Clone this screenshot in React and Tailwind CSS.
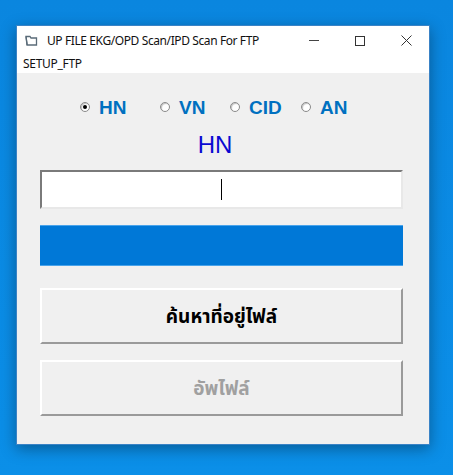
import { useState } from "react";

const ui = { fontFamily: '"Noto Sans", "Open Sans", sans-serif' };
const arial = { fontFamily: '"Liberation Sans", Arial, sans-serif' };
const thai = { fontFamily: '"Noto Sans Thai", Tahoma, "Noto Sans", sans-serif' };

function Radio({ label, checked, onClick, width }) {
  return (
    <button onClick={onClick} className={`flex items-center gap-[9px] ${width}`}>
      <span className="w-[10px] h-[10px] rounded-full border border-[#8a8a8a] bg-white flex items-center justify-center shadow-[inset_1px_1px_1px_rgba(0,0,0,0.25)]">
        {checked && <span className="w-[4px] h-[4px] rounded-full bg-black" />}
      </span>
      <span className="text-[19px] font-bold leading-none text-[#0070c0]" style={arial}>{label}</span>
    </button>
  );
}

export default function App() {
  const [mode, setMode] = useState("HN");

  return (
    <div className="w-[453px] h-[475px] bg-gradient-to-b from-[#0a86df] to-[#0b8fe8] pt-[25px] pl-[16px]">
      <div className="w-[414px] h-[420px] bg-[#f0f0f0] border border-[#3a83c6] shadow-[0_4px_14px_rgba(0,0,0,0.35)] flex flex-col">
        <div className="h-[29px] bg-white flex items-center pl-[8px]" style={ui}>
          <svg width="13" height="12" viewBox="0 0 13 12" className="mr-[9px]">
            <path d="M1 1.5h4l1 1.5h5.5v7H2z" fill="none" stroke="#5a6b78" strokeWidth="1.3" />
            <path d="M1 1.5l1.2 8.5" stroke="#5a6b78" strokeWidth="1.3" />
          </svg>
          <span className="text-[12px] text-[#111] tracking-[-0.4px]">UP FILE EKG/OPD Scan/IPD Scan For FTP</span>
          <div className="ml-auto flex items-center h-full">
            <div className="w-[46px] flex justify-center">
              <div className="w-[10px] h-px bg-[#444]" />
            </div>
            <div className="w-[46px] flex justify-center">
              <div className="w-[10px] h-[10px] border border-[#333]" />
            </div>
            <div className="w-[46px] flex justify-center">
              <svg width="11" height="11" viewBox="0 0 11 11">
                <path d="M0.5 0.5l10 10M10.5 0.5l-10 10" stroke="#333" strokeWidth="1" />
              </svg>
            </div>
          </div>
        </div>
        <div className="h-[18px] bg-white pl-[6px] flex items-center" style={ui}>
          <span className="text-[12px] text-[#111] leading-none tracking-[-0.3px]">SETUP_FTP</span>
        </div>

        <div className="flex flex-col pl-[23px] pr-[26px]">
          <div className="flex items-center mt-[26px] pl-[40px] h-[16px]">
            <Radio label="HN" checked={mode === "HN"} onClick={() => setMode("HN")} width="w-[80px]" />
            <Radio label="VN" checked={mode === "VN"} onClick={() => setMode("VN")} width="w-[70px]" />
            <Radio label="CID" checked={mode === "CID"} onClick={() => setMode("CID")} width="w-[71px]" />
            <Radio label="AN" checked={mode === "AN"} onClick={() => setMode("AN")} width="w-[60px]" />
          </div>

          <div className="mt-[18px] pr-[13px] text-center text-[24px] leading-none text-[#0a0ad2] h-[24px]" style={arial}>
            {mode}
          </div>

          <div className="mt-[13px] h-[39px] bg-white border-2 border-t-[#7a7a7a] border-l-[#7a7a7a] border-b-[#e8e8e8] border-r-[#e8e8e8] flex items-center justify-center">
            <div className="w-px h-[21px] bg-black" />
          </div>

          <div className="mt-[16px] h-[41px] bg-[#0078d7] border-y border-[#49a3ea]" />

          <button className="mt-[22px] h-[56px] pt-[4px] border-2 border-t-white border-l-white border-b-[#9a9a9a] border-r-[#9a9a9a] bg-[#f0f0f0] text-[19px] font-bold text-black" style={thai}>
            ค้นหาที่อยู่ไฟล์
          </button>

          <button disabled className="mt-[16px] h-[56px] pt-[4px] border-2 border-t-white border-l-white border-b-[#9a9a9a] border-r-[#9a9a9a] bg-[#f0f0f0] text-[19px] font-bold text-[#a0a0a0]" style={thai}>
            อัพไฟล์
          </button>
        </div>
      </div>
    </div>
  );
}
